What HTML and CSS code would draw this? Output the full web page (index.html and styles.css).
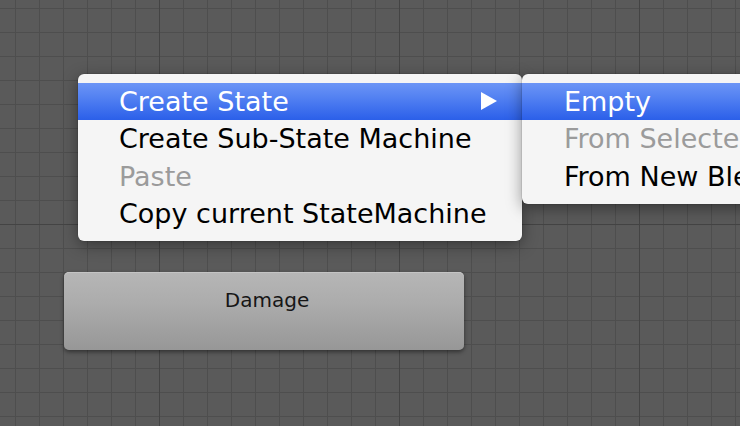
FILE: index.html
```html
<!DOCTYPE html>
<html>
<head>
<meta charset="utf-8">
<link rel="stylesheet" href="styles.css">
</head>
<body>
<div class="canvas">
  <div class="node"><span class="node-label">Damage</span></div>

  <div class="menu menu-main">
    <div class="item active"><span class="label">Create State</span><span class="arrow"></span></div>
    <div class="item"><span class="label">Create Sub-State Machine</span></div>
    <div class="item disabled"><span class="label">Paste</span></div>
    <div class="item"><span class="label">Copy current StateMachine</span></div>
  </div>

  <div class="menu menu-sub">
    <div class="item active"><span class="label">Empty</span></div>
    <div class="item disabled"><span class="label">From Selected Clip</span></div>
    <div class="item"><span class="label">From New Blend Tree</span></div>
  </div>
</div>
</body>
</html>
```

FILE: styles.css
```css
html, body {
  margin: 0;
  padding: 0;
  width: 740px;
  height: 426px;
  overflow: hidden;
}

.canvas {
  position: relative;
  width: 740px;
  height: 426px;
  overflow: hidden;
  background-color: #5a5a5a;
  background-image:
    linear-gradient(to right, #444444 1px, transparent 1px),
    linear-gradient(to bottom, #444444 1px, transparent 1px),
    linear-gradient(to right, #4e4e4e 1px, transparent 1px),
    linear-gradient(to bottom, #4e4e4e 1px, transparent 1px);
  background-size: 240px 100%, 100% 240px, 24px 100%, 100% 24px;
  background-position: 159px 0, 0 224px, 15px 0, 0 8px;
  font-family: "DejaVu Sans", "Liberation Sans", sans-serif;
}

.node {
  position: absolute;
  left: 64px;
  top: 272px;
  width: 400px;
  height: 78px;
  box-sizing: border-box;
  border-radius: 5px;
  background: linear-gradient(to bottom, #b6b6b6 0%, #acacac 40%, #979797 100%);
  box-shadow: 0 1px 0 #c4c4c4 inset, 0 2px 4px rgba(0, 0, 0, 0.45);
  display: flex;
  justify-content: center;
  padding-top: 14px;
  padding-left: 6px;
}

.node-label {
  font-size: 20px;
  color: #161616;
  line-height: 28px;
}

.menu {
  position: absolute;
  top: 74px;
  box-sizing: border-box;
  padding: 8.5px 0;
  background: #f5f5f5;
  border-radius: 6px;
  box-shadow: 0 4px 16px rgba(0, 0, 0, 0.4), 0 0 0 0.5px rgba(0, 0, 0, 0.15);
  display: flex;
  flex-direction: column;
}

.menu-main {
  left: 78px;
  width: 444px;
}

.menu-sub {
  left: 522px;
  width: 300px;
}

.item {
  height: 37.5px;
  display: flex;
  align-items: center;
  justify-content: space-between;
  padding: 0 25px 0 41px;
  font-size: 27px;
  line-height: 37.5px;
  color: #000;
  white-space: nowrap;
}

.menu-sub .item {
  padding-left: 42px;
}

.item.active {
  color: #fff;
  background: linear-gradient(to bottom, #6c95f6 0%, #4f7ef1 45%, #2b5fe9 100%);
}

.item.disabled {
  color: #9b9b9b;
}

.arrow {
  width: 0;
  height: 0;
  border-top: 9px solid transparent;
  border-bottom: 9px solid transparent;
  border-left: 16px solid #fff;
}
```
